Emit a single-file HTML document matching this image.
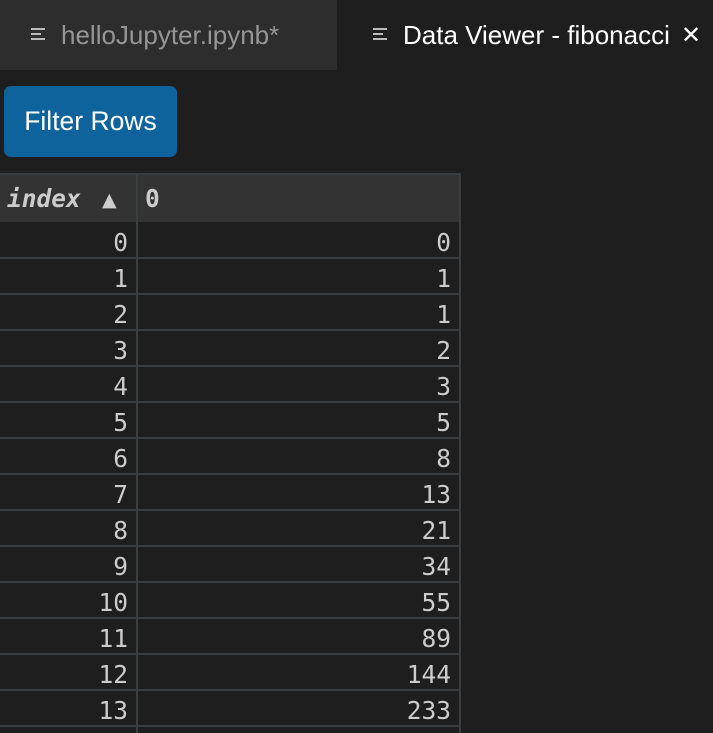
<!DOCTYPE html><html><head><style>
body{margin:0;width:713px;height:727px;background:#1e1e1e;overflow:hidden;position:relative;font-family:"Liberation Sans",sans-serif}
.tab1{position:absolute;left:0;top:0;width:337px;height:70px;background:#2d2d2d}
.t{position:absolute;top:20px;font-size:26px;line-height:30px}
.ic{position:absolute;top:28px;width:14px}
.ic i{display:block;height:2px;background:#bbb;margin-bottom:3px}
.btn{position:absolute;left:4px;top:86px;width:173px;height:71px;background:#0e639c;border-radius:7px;color:#fff;font-size:26.5px;line-height:71px;text-align:center}
.grid{position:absolute;left:0;top:173px;width:461px;height:560px}
.hline{position:absolute;left:0;width:461px;height:2px;background:#3a3d41}
.vline{position:absolute;top:0;width:2px;height:560px;background:#3a3d41}
.hdr{position:absolute;left:0;top:2px;width:459px;height:47px;background:#333}
.c{position:absolute;font-family:"DejaVu Sans Mono","Liberation Mono",monospace;font-size:24.5px;line-height:30px;color:#ccc}
</style></head><body>
<div class="tab1"></div>
<div class="ic" style="left:31px"><i></i><i style="width:10px"></i><i></i></div>
<div class="t" style="left:61px;color:#969696">helloJupyter.ipynb*</div>
<div class="ic" style="left:373px"><i></i><i style="width:10px"></i><i></i></div>
<div class="t" style="left:403px;color:#fff">Data Viewer - fibonacci</div>
<div class="t" style="left:681px;color:#fff;font-size:24px;top:21px">✕</div>
<div class="btn">Filter Rows</div>
<div class="grid">
<div class="hdr"></div>
<div class="hline" style="top:0"></div>
<div class="vline" style="left:136px"></div>
<div class="vline" style="left:459px"></div>
<div class="c" style="left:7px;top:11px;font-style:italic;font-weight:bold">index</div>
<div class="c" style="left:102px;font-family:'DejaVu Sans',sans-serif;font-size:19px;top:12px">▲</div>
<div class="c" style="left:145px;top:11px;font-weight:bold">0</div>
</div>
<div id="rows"></div>
<script>
var v=[0,1,1,2,3,5,8,13,21,34,55,89,144,233],h='';
for(var k=0;k<14;k++){var y=222+36*k;
h+='<div class="hline" style="position:absolute;top:'+(y+35)+'px"></div>';
h+='<div class="c" style="right:585px;top:'+(y+6)+'px">'+k+'</div>';
h+='<div class="c" style="right:262px;top:'+(y+6)+'px">'+v[k]+'</div>';}
document.getElementById('rows').innerHTML=h;
</script>
</body></html>
